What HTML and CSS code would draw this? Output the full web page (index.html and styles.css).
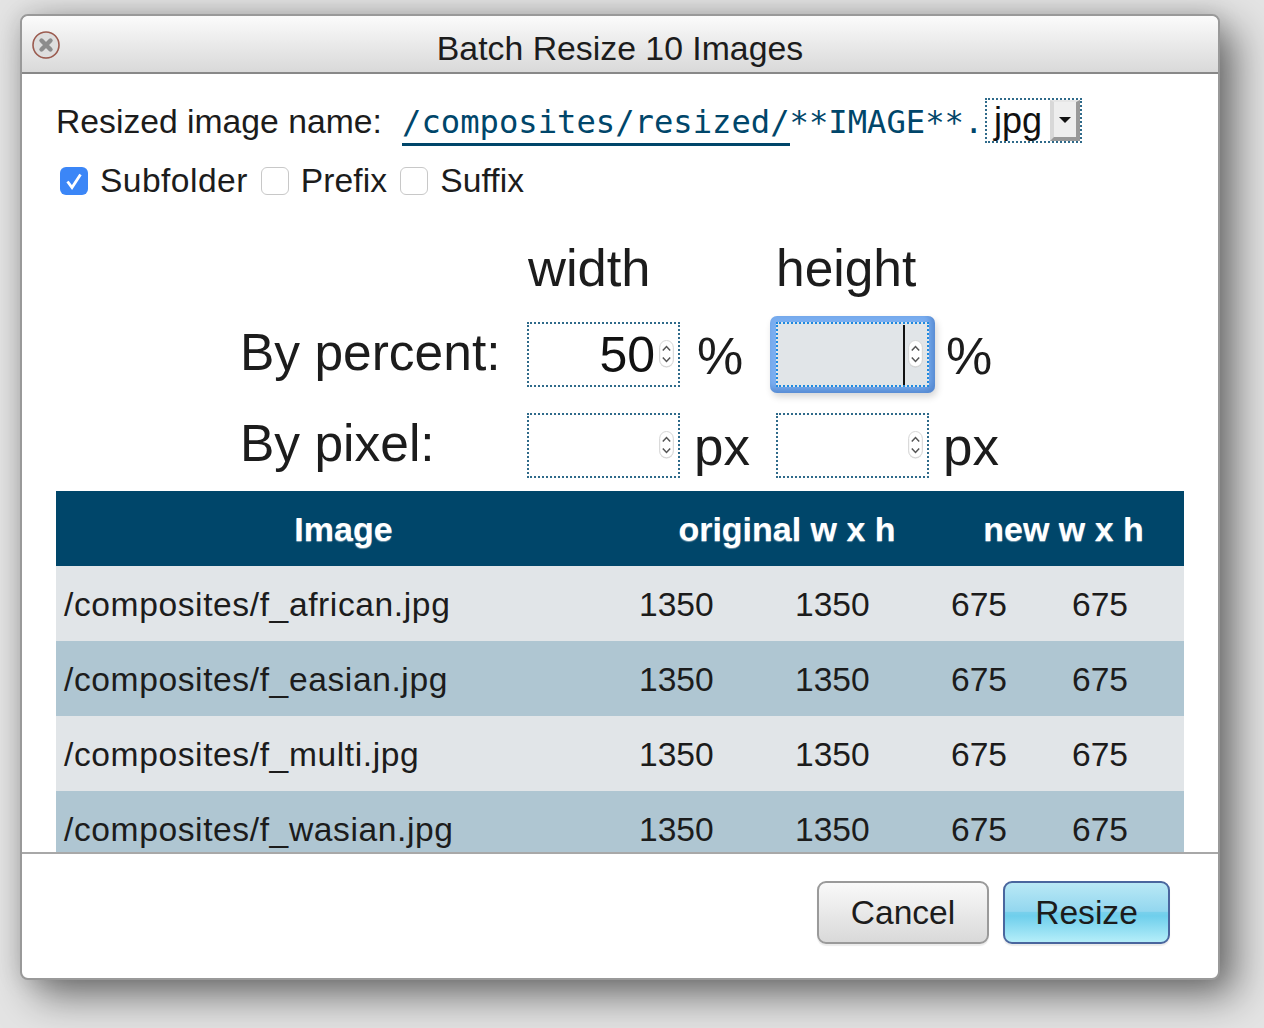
FILE: index.html
```html
<!DOCTYPE html>
<html lang="en">
<head>
    <meta charset="UTF-8">
    <title>Batch Resize 10 Images</title>
    <link rel="stylesheet" href="styles.css">
</head>
<body>
<div class="dialog">
    <div class="titlebar">
        <svg class="close" width="30" height="30" viewBox="0 0 30 30">
            <circle cx="15" cy="15.5" r="13.5" fill="#000" opacity="0.12"/>
            <circle cx="15" cy="15" r="13" fill="#dedede" stroke="#9c5c50" stroke-width="1.6"/>
            <path d="M10.5 10.5L19.5 19.5M19.5 10.5L10.5 19.5" stroke="#8c8c8c" stroke-width="4.4" stroke-linecap="round"/>
        </svg>
        Batch Resize 10 Images
    </div>
    <div class="content">
        <div class="name-row">
            <span class="name-label">Resized image name:</span>
            <span class="name-value"><span class="name-folder">/composites/resized/</span>**IMAGE**.</span>
            <div class="select">
                <span>jpg</span>
                <span class="select-btn"><i></i></span>
            </div>
        </div>
        <div class="check-row">
            <label class="check wide"><span class="box on"><svg width="28" height="28" viewBox="0 0 28 28"><path d="M7.5 14.5L12 20.5L20.5 7.5" fill="none" stroke="#fff" stroke-width="2.8"/></svg></span>Subfolder</label>
            <label class="check"><span class="box"></span>Prefix</label>
            <label class="check"><span class="box"></span>Suffix</label>
        </div>
        <div class="size-grid">
            <div></div>
            <div class="col-head">width</div>
            <div></div>
            <div class="col-head tight">height</div>
            <div></div>

            <div class="row-head">By percent:</div>
            <div class="field">50<svg class="spin"><use href="#spin"/></svg></div>
            <div class="unit">%</div>
            <div class="field focus"><span class="caret"></span><svg class="spin"><use href="#spin"/></svg></div>
            <div class="unit">%</div>

            <div class="row-head">By pixel:</div>
            <div class="field"><svg class="spin"><use href="#spin"/></svg></div>
            <div class="unit tight">px</div>
            <div class="field"><svg class="spin"><use href="#spin"/></svg></div>
            <div class="unit tight">px</div>
        </div>
        <table class="images">
            <colgroup>
                <col class="c-name"><col class="c-num"><col class="c-num"><col class="c-new"><col>
            </colgroup>
            <thead>
                <tr><th>Image</th><th colspan="2">original w x h</th><th colspan="2">new w x h</th></tr>
            </thead>
            <tbody>
                <tr><td class="path">/composites/f_african.jpg</td><td>1350</td><td>1350</td><td>675</td><td>675</td></tr>
                <tr><td class="path">/composites/f_easian.jpg</td><td>1350</td><td>1350</td><td>675</td><td>675</td></tr>
                <tr><td class="path">/composites/f_multi.jpg</td><td>1350</td><td>1350</td><td>675</td><td>675</td></tr>
                <tr><td class="path">/composites/f_wasian.jpg</td><td>1350</td><td>1350</td><td>675</td><td>675</td></tr>
            </tbody>
        </table>
    </div>
    <div class="footer">
        <button class="btn">Cancel</button>
        <button class="btn primary">Resize</button>
    </div>
</div>
<svg width="0" height="0" class="defs">
    <symbol id="spin" viewBox="0 0 15 28">
        <rect x="0.5" y="1" width="14" height="26.5" rx="7" fill="#bbb" opacity="0.6"/>
        <rect x="0.7" y="0.5" width="13.6" height="26.2" rx="6.8" fill="#fff" stroke="#d6d6d6"/>
        <path d="M3.8 10.5L7.5 6.5L11.2 10.5M3.8 17.5L7.5 21.5L11.2 17.5" fill="none" stroke="#555" stroke-width="1.5"/>
    </symbol>
</svg>
</body>
</html>
```

FILE: styles.css
```css
body {
    margin: 0;
    height: 1028px;
    overflow: hidden;
    background: #e4e4e4;
    font-family: "Liberation Sans", Arial, sans-serif;
    font-size: 33.6px;
    color: #1c1c1c;
}
.defs {
    display: block;
}
.dialog {
    box-sizing: border-box;
    width: 1200px;
    height: 966px;
    margin: 14px 0 0 20px;
    border: 2px solid #999;
    border-radius: 8px;
    background: #fff;
    box-shadow: 16px 16px 40px rgba(0,0,0,0.5), 0 0 24px rgba(0,0,0,0.15);
    display: flex;
    flex-direction: column;
    overflow: hidden;
}
.titlebar {
    position: relative;
    flex: none;
    box-sizing: border-box;
    height: 58px;
    line-height: 64px;
    font-size: 33.8px;
    text-align: center;
    border-bottom: 2px solid #888;
    border-radius: 6px 6px 0 0;
    background: linear-gradient(#fbfbfb, #d9d9d9);
}
.close {
    position: absolute;
    left: 9px;
    top: 14px;
}
.content {
    flex: 1;
    min-height: 0;
    overflow: hidden;
    isolation: isolate;
    padding: 24px 34px 0;
}

/* name row */
.name-row {
    display: flex;
    align-items: center;
    height: 45px;
}
.name-label {
    width: 346px;
    flex: none;
    font-size: 33.7px;
    padding-top: 2px;
}
.name-value {
    font-family: "DejaVu Sans Mono", monospace;
    font-size: 32.2px;
    color: #00466a;
    line-height: 45px;
    width: 583px;
    flex: none;
    white-space: nowrap;
    padding-top: 4px;
}
.name-folder {
    border-bottom: 3px solid #00466a;
    padding-bottom: 2px;
}
.select {
    box-sizing: border-box;
    width: 97px;
    height: 45px;
    border: 2px dotted #2f6a8a;
    display: flex;
    align-items: center;
    justify-content: space-between;
    padding-left: 7px;
    font-size: 36px;
    color: #111;
}
.select-btn {
    box-sizing: border-box;
    width: 30px;
    height: 41px;
    background: #eee;
    border-style: solid;
    border-width: 2px 4px 4px 4px;
    border-color: #e6e6e6 #999 #999 #d8d8d8;
    display: flex;
    align-items: center;
    justify-content: center;
}
.select-btn i {
    border-top: 6px solid #111;
    border-left: 6px solid transparent;
    border-right: 6px solid transparent;
}

/* check boxes */
.check-row {
    display: flex;
    align-items: center;
    gap: 13px;
    margin: 24px 0 0 4px;
    height: 28px;
    letter-spacing: 0.1px;
}
.check {
    display: flex;
    align-items: center;
    gap: 12px;
}
.check.wide {
    letter-spacing: 0.45px;
}
.box {
    box-sizing: border-box;
    width: 28px;
    height: 28px;
    border: 1.5px solid #c8c8c8;
    border-radius: 6px;
    background: #fff;
}
.box.on {
    border: 0;
    background: #3b86f7;
}
.box svg {
    display: block;
}

/* width / height inputs */
.size-grid {
    display: grid;
    grid-template-columns: 286px 153px 96px 153px auto;
    grid-template-rows: 101px 65px 65px;
    row-gap: 26px;
    margin-left: 185px;
}
.col-head {
    font-size: 52.5px;
    align-self: start;
    line-height: 60px;
    margin-top: 43px;
    padding-left: 1px;
    white-space: nowrap;
}
.col-head.tight {
    font-size: 51.5px;
    padding-left: 0;
}
.row-head {
    font-size: 51.5px;
    line-height: 60px;
    margin-left: -1px;
    white-space: nowrap;
}
.unit {
    font-size: 52px;
    line-height: 68px;
    padding-left: 17px;
}
.unit.tight {
    font-size: 53px;
    padding-left: 14px;
}
.field {
    position: relative;
    box-sizing: border-box;
    border: 2px dotted #2f6a8a;
    background: #fff;
    display: flex;
    align-items: center;
    justify-content: flex-end;
    padding: 0 4px 0 0;
    font-size: 50px;
    color: #111;
}
.spin {
    width: 15px;
    height: 28px;
    margin: -2px 0 0 4px;
    flex: none;
}
.field.focus {
    background: #e1e5e8;
    border-color: #1e8ae0;
}
.field.focus::before {
    content: "";
    position: absolute;
    inset: -8px;
    z-index: -1;
    border-radius: 7px;
    background: #7aaef0;
    box-shadow: inset -4px -4px 7px rgba(40,90,170,0.45), 2px 4px 7px rgba(0,0,0,0.16);
}
.caret {
    width: 2px;
    align-self: stretch;
    margin: 1px -1px 0 0;
    background: #111;
}

/* table */
.images {
    width: 1128px;
    margin-top: 13px;
    table-layout: fixed;
    border-collapse: collapse;
}
.c-name {
    width: 575px;
}
.c-num {
    width: 156px;
}
.c-new {
    width: 121px;
}
.images th {
    height: 75px;
    padding: 2px 0 0;
    box-sizing: border-box;
    background: #00466a;
    color: #fff;
    font-size: 34px;
    text-shadow: 0 1px 1px rgba(255,255,255,0.45);
}
.images td {
    box-sizing: border-box;
    height: 75px;
    padding: 2px 0 0 8px;
}
.images .path {
    letter-spacing: 0.6px;
}
.images tbody tr:nth-child(odd) {
    background: #e1e5e8;
}
.images tbody tr:nth-child(even) {
    background: #afc6d2;
}

/* footer */
.footer {
    flex: none;
    box-sizing: border-box;
    height: 126px;
    border-top: 2px solid #a8a8a8;
    display: flex;
    justify-content: flex-end;
    align-items: flex-start;
    gap: 14px;
    padding: 27px 48px 0 0;
}
.btn {
    box-sizing: border-box;
    width: 172px;
    height: 63px;
    font: inherit;
    color: #1c1c1c;
    border: 2px solid #9a9a9a;
    border-radius: 9px;
    background: linear-gradient(#f9f9f9, #d9d9d9);
    box-shadow: 0 2px 1px rgba(0,0,0,0.08);
    padding: 0;
}
.btn.primary {
    width: 167px;
    border-color: #4a669e;
    background: linear-gradient(#b9e8f5 0%, #93d7ef 48%, #78d0ec 50%, #6fcfec 56%, #b5eef9 100%);
}
```
